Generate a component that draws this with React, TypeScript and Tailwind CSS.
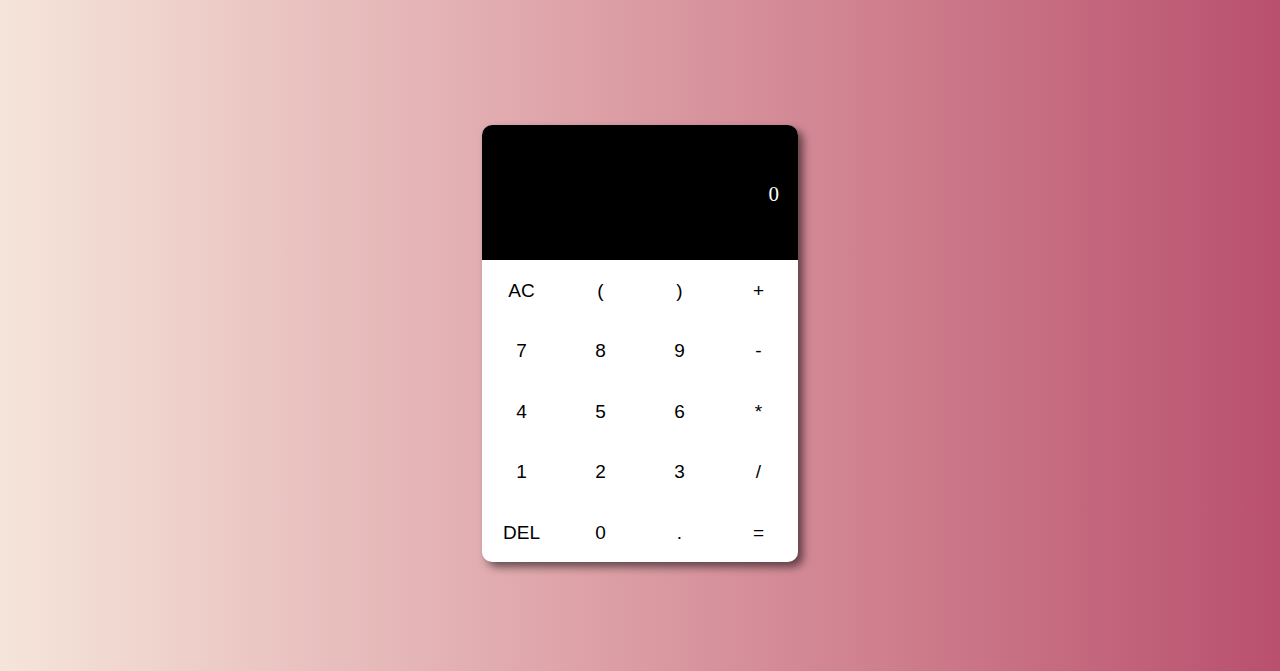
const keys = [
  ["AC", "(", ")", "+"],
  ["7", "8", "9", "-"],
  ["4", "5", "6", "*"],
  ["1", "2", "3", "/"],
  ["DEL", "0", ".", "="],
];

export default function App() {
  return (
    <div className="h-[671px] w-full bg-gradient-to-r from-[#f5e5db] to-[#b9506e] flex justify-center pt-[125px]">
      <div className="w-[316px] h-[437px] rounded-[10px] overflow-hidden bg-white shadow-[5px_5px_8px_rgba(0,0,0,0.55)] flex flex-col">
        {/* Display */}
        <div className="h-[135px] bg-black flex items-center justify-end pr-[19px]">
          <span className="text-white text-[21px] font-['Liberation_Serif',serif] mt-[4px]">0</span>
        </div>

        {/* Keypad */}
        <div className="flex-1 grid grid-cols-4 grid-rows-5">
          {keys.flat().map((k) => (
            <button
              key={k}
              className="flex items-center justify-center pt-[2px] text-[19px] text-black font-['Liberation_Sans',Arial,sans-serif]"
            >
              {k}
            </button>
          ))}
        </div>
      </div>
    </div>
  );
}
